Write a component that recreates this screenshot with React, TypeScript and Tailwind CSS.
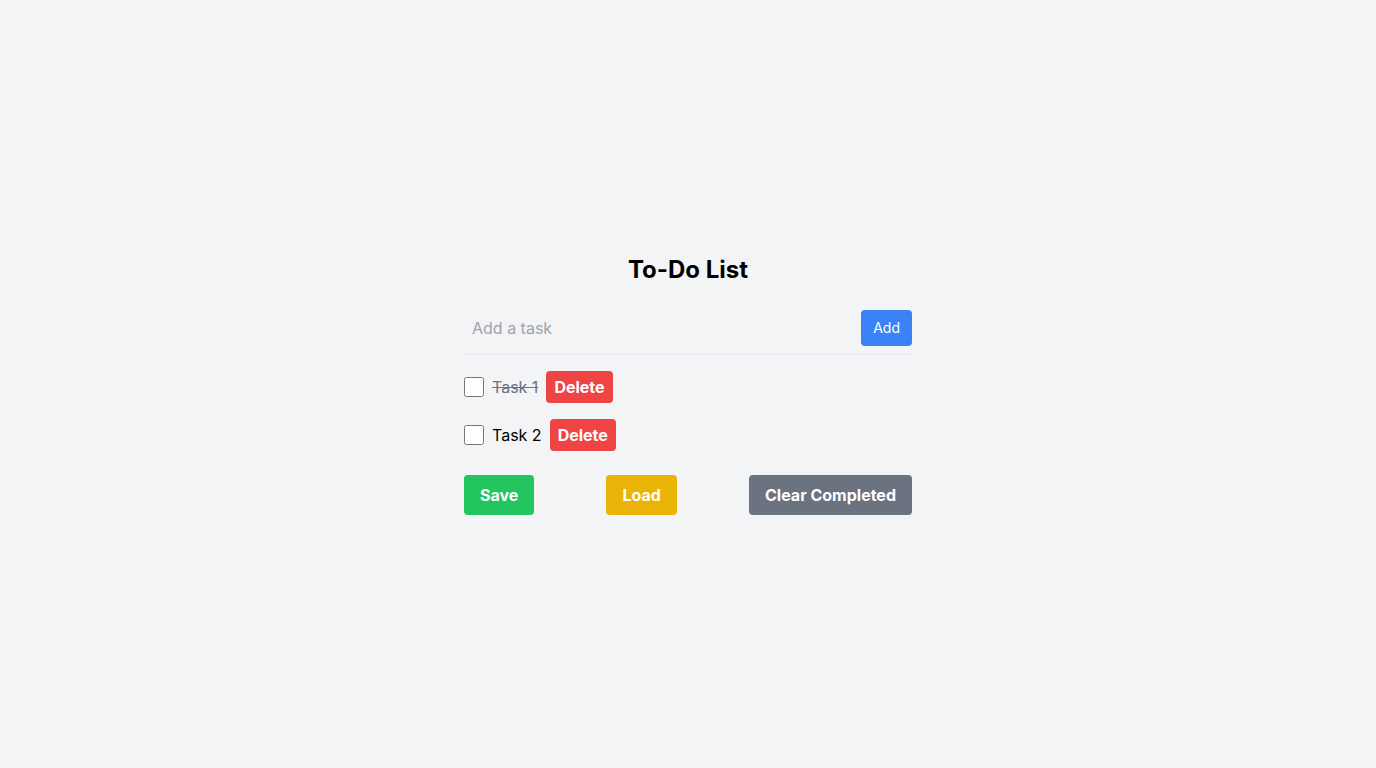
import { useState } from "react";

type Task = { id: number; text: string; done: boolean };

export default function App() {
  const [tasks, setTasks] = useState<Task[]>([
    { id: 1, text: "Task 1", done: true },
    { id: 2, text: "Task 2", done: false },
  ]);
  const [input, setInput] = useState("");

  const addTask = () => {
    if (!input.trim()) return;
    setTasks([...tasks, { id: Date.now(), text: input.trim(), done: false }]);
    setInput("");
  };

  return (
    <div
      className="min-h-screen bg-[#f3f4f6] flex items-center justify-center"
      style={{ fontFamily: "Inter, 'Liberation Sans', sans-serif" }}
    >
      <div className="w-[448px]">
        <h1 className="text-2xl font-bold text-center mb-6 text-black">To-Do List</h1>

        <div className="flex items-center border-b border-[#e5e7eb] pb-2 mb-4">
          <input
            value={input}
            onChange={(e) => setInput(e.target.value)}
            placeholder="Add a task"
            className="flex-1 bg-transparent px-2 py-1.5 text-base outline-none placeholder:text-[#9ca3af]"
          />
          <button
            onClick={addTask}
            className="bg-[#3b82f6] text-white text-sm px-3 py-2 rounded"
          >
            Add
          </button>
        </div>

        <ul className="space-y-4">
          {tasks.map((t) => (
            <li key={t.id} className="flex items-center gap-2">
              <input
                type="checkbox"
                checked={false}
                onChange={() =>
                  setTasks(tasks.map((x) => (x.id === t.id ? { ...x, done: !x.done } : x)))
                }
                className="w-5 h-5 m-0"
              />
              <span className={t.done ? "line-through text-[#6b7280]" : "text-black"}>{t.text}</span>
              <button
                onClick={() => setTasks(tasks.filter((x) => x.id !== t.id))}
                className="bg-[#ef4444] text-white font-bold px-2 py-1 rounded"
              >
                Delete
              </button>
            </li>
          ))}
        </ul>

        <div className="flex justify-between mt-6">
          <button className="bg-[#22c55e] text-white font-bold px-4 py-2 rounded">Save</button>
          <button className="bg-[#eab308] text-white font-bold px-4 py-2 rounded">Load</button>
          <button
            onClick={() => setTasks(tasks.filter((x) => !x.done))}
            className="bg-[#6b7280] text-white font-bold px-4 py-2 rounded"
          >
            Clear Completed
          </button>
        </div>
      </div>
    </div>
  );
}
